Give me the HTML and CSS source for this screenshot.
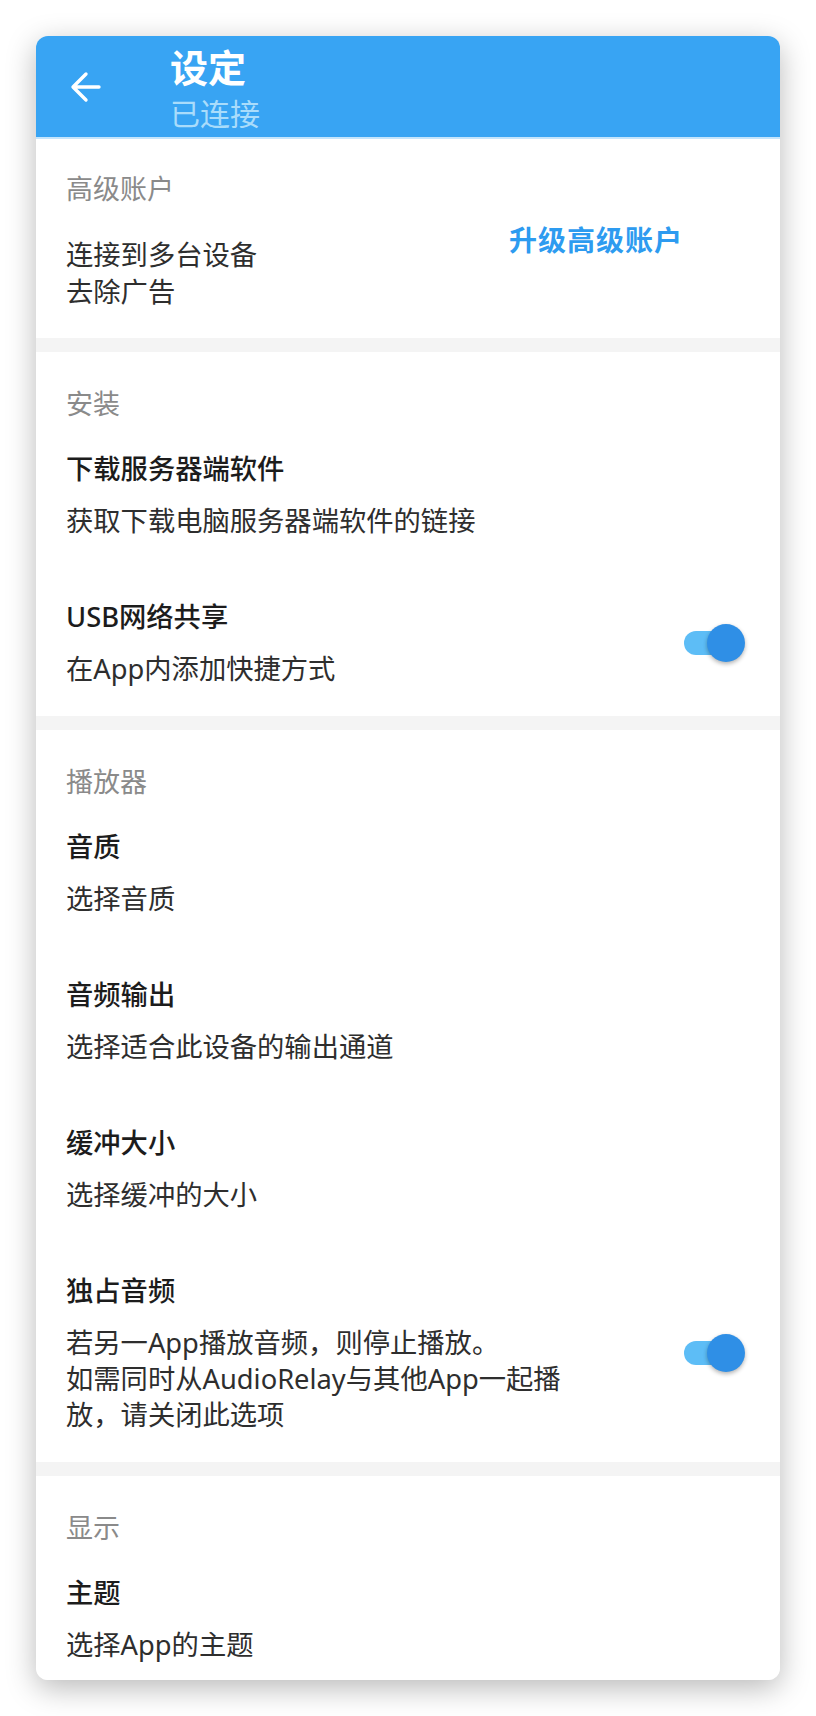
FILE: index.html
```html
<!DOCTYPE html>
<html lang="zh-CN">
<head>
  <meta charset="UTF-8" />
  <meta name="viewport" content="width=device-width, initial-scale=1">
  <title>设定</title>
  <link rel="stylesheet" href="styles.css">
</head>
<body>

  <div class="screen">
    <div class="appbar">
      <div class="back">
        <svg width="32" height="32" viewBox="0 0 32 32">
          <path d="M29 16H4 M16 3L3 16L16 29" fill="none" stroke="#fff" stroke-width="3.4" stroke-linecap="round" stroke-linejoin="round"/>
        </svg>
      </div>
      <div class="titles">
        <div class="title">设定</div>
        <div class="subtitle">已连接</div>
      </div>
    </div>

    <div class="section first">
      <div class="label">高级账户</div>
      <div class="item premium">
        <div class="text">
          <div class="desc tight">连接到多台设备<br>去除广告</div>
        </div>
        <div class="upgrade">升级高级账户</div>
      </div>
    </div>

    <div class="section">
      <div class="label">安装</div>
      <div class="item">
        <div class="text">
          <div class="name">下载服务器端软件</div>
          <div class="desc">获取下载电脑服务器端软件的链接</div>
        </div>
      </div>
      <div class="item">
        <div class="text">
          <div class="name">USB网络共享</div>
          <div class="desc">在App内添加快捷方式</div>
        </div>
        <div class="switch on"><span class="thumb"></span></div>
      </div>
    </div>

    <div class="section">
      <div class="label">播放器</div>
      <div class="item">
        <div class="text">
          <div class="name">音质</div>
          <div class="desc">选择音质</div>
        </div>
      </div>
      <div class="item">
        <div class="text">
          <div class="name">音频输出</div>
          <div class="desc">选择适合此设备的输出通道</div>
        </div>
      </div>
      <div class="item">
        <div class="text">
          <div class="name">缓冲大小</div>
          <div class="desc">选择缓冲的大小</div>
        </div>
      </div>
      <div class="item">
        <div class="text">
          <div class="name">独占音频</div>
          <div class="desc">若另一App播放音频，则停止播放。<br>如需同时从AudioRelay与其他App一起播<br>放，请关闭此选项</div>
        </div>
        <div class="switch on"><span class="thumb"></span></div>
      </div>
    </div>

    <div class="section">
      <div class="label">显示</div>
      <div class="item">
        <div class="text">
          <div class="name">主题</div>
          <div class="desc">选择App的主题</div>
        </div>
      </div>
    </div>
  </div>

</body>
</html>
```

FILE: styles.css
```css
body {
  margin: 0;
  padding: 36px;
  background: #fff;
  font-family: "Noto Sans", "Noto Sans CJK SC", sans-serif;
}

.screen {
  width: 744px;
  height: 1644px;
  background: #f4f4f4;
  border-radius: 12px;
  overflow: hidden;
  box-shadow: 0 8px 30px rgba(0, 0, 0, 0.28);
}

.appbar {
  display: flex;
  align-items: center;
  background: #38a4f3;
  padding: 9px 0 5px 34px;
  border-bottom: 2px solid #c4e5fc;
}

.back {
  width: 32px;
  height: 32px;
  margin-right: 68px;
  margin-top: -4px;
}

.back svg { display: block; }

.title {
  color: #fff;
  font-size: 38px;
  font-weight: 700;
  line-height: 44px;
}

.subtitle {
  color: #a9dcfb;
  font-size: 30px;
  line-height: 36px;
  margin-top: 7px;
}

.section {
  background: #fff;
  padding: 34px 35px 0 30px;
  margin-bottom: 14px;
}

.section.first { padding-top: 32px; }

.label {
  color: #8a8a8a;
  font-size: 27px;
  line-height: 36px;
}

.item {
  display: flex;
  align-items: center;
  padding: 29px 0 31px;
}

.item:last-child { padding-bottom: 29px; }

.text { flex: 1; }

.name {
  color: #1c1c1c;
  font-size: 27.3px;
  font-weight: 500;
  line-height: 36px;
  margin-bottom: 16px;
}

.desc {
  color: #2e2e2e;
  font-size: 27.3px;
  line-height: 36px;
}

.desc.tight { line-height: 37px; }

.item.premium {
  align-items: flex-start;
  padding-bottom: 28px;
}

.upgrade {
  color: #2d9bf0;
  font-size: 28px;
  font-weight: 700;
  letter-spacing: 1px;
  line-height: 36px;
  margin: -14px 62px 0 0;
}

.switch {
  position: relative;
  width: 61px;
  height: 38px;
}

.switch::before {
  content: "";
  position: absolute;
  left: 0;
  top: 7px;
  width: 56px;
  height: 24px;
  border-radius: 12px;
  background: #5dbdf6;
}

.thumb {
  position: absolute;
  right: 0;
  top: 0;
  width: 38px;
  height: 38px;
  border-radius: 50%;
  background: #2f8fe6;
  box-shadow: 0 2px 4px rgba(0, 0, 0, 0.3);
}
```
